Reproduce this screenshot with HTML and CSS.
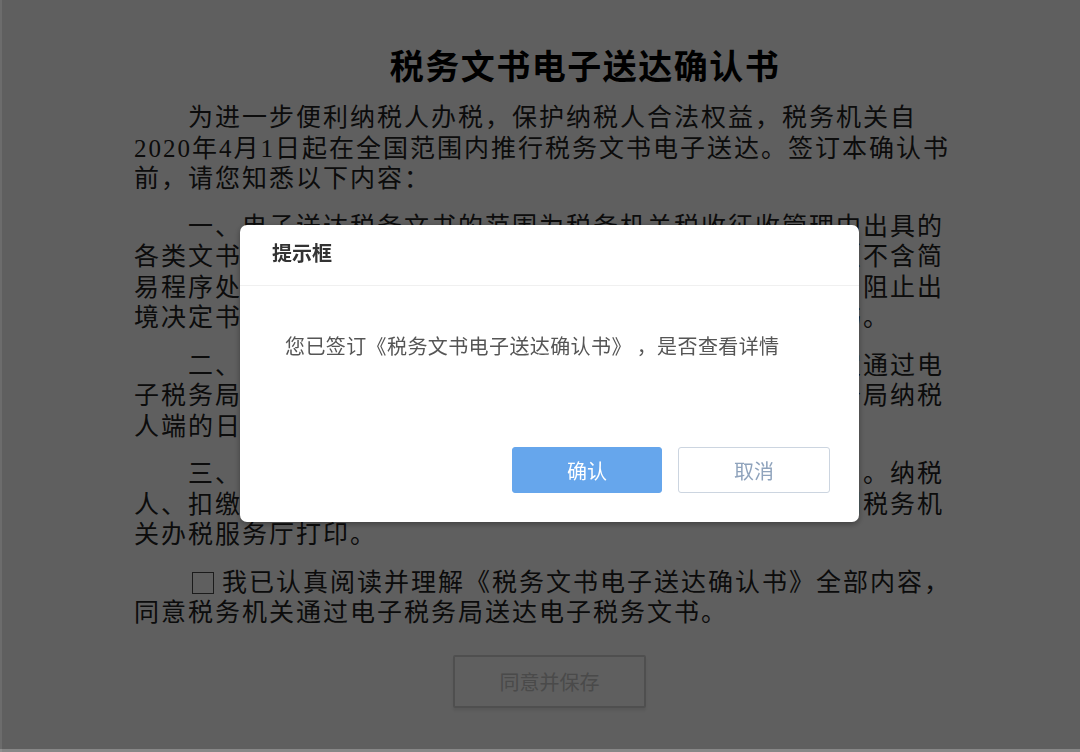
FILE: index.html
```html
<!DOCTYPE html>
<html lang="zh-CN">
<head>
  <meta charset="UTF-8">
  <title>税务文书电子送达确认书</title>
  <link rel="stylesheet" href="styles.css">
</head>
<body>
  <div class="doc">
    <h1 class="doc-title">税务文书电子送达确认书</h1>
    <p class="para">为进一步便利纳税人办税，保护纳税人合法权益，税务机关自2020年4月1日起在全国范围内推行税务文书电子送达。签订本确认书前，请您知悉以下内容：</p>
    <p class="para">一、电子送达税务文书的范围为税务机关税收征收管理中出具的各类文书，暂不包括税务处理决定书、税务行政处罚决定书（不含简易程序处罚）、税收保全措施决定书、税收强制执行决定书、阻止出境决定书以及税务稽查、税务行政复议过程中使用的税务文书。</p>
    <p class="para">二、签订本确认书后，税务机关将按照相关法律法规规定通过电子税务局送达的税务文书，以电子版式税务文书到达电子税务局纳税人端的日期为送达日期。</p>
    <p class="para">三、税务文书电子送达与其他送达方式具有同等法律效力。纳税人、扣缴义务人可在电子税务局查询、下载、打印，也可以到税务机关办税服务厅打印。</p>
    <p class="para agree"><input type="checkbox" class="agree-box" id="agree">我已认真阅读并理解《税务文书电子送达确认书》全部内容，同意税务机关通过电子税务局送达电子税务文书。</p>
    <div class="save-row">
      <button class="save-btn" type="button" disabled>同意并保存</button>
    </div>
  </div>

  <div class="mask">
    <div class="dialog">
      <div class="dialog-head">提示框</div>
      <div class="dialog-body">您已签订《税务文书电子送达确认书》 ，是否查看详情</div>
      <div class="dialog-foot">
        <button class="dlg-btn primary" type="button">确认</button>
        <button class="dlg-btn plain" type="button">取消</button>
      </div>
    </div>
  </div>
</body>
</html>
```

FILE: styles.css
```css
html, body {
  margin: 0;
  padding: 0;
  height: 100%;
  overflow: hidden;
}
body {
  background: #fff;
  color: #333;
  font-family: "Liberation Serif", "Noto Sans CJK SC", serif;
  text-spacing-trim: space-all;
}
.doc {
  width: 820px;
  margin-left: 134px;
  padding-top: 45px;
}
.doc-title {
  margin: 0 0 18px;
  padding-left: 82px;
  text-align: center;
  font-family: "Noto Sans CJK SC", sans-serif;
  font-size: 34px;
  font-weight: bold;
  letter-spacing: 1.5px;
  line-height: 40px;
  color: #000;
}
.para {
  margin: 0 0 17px;
  font-size: 25px;
  letter-spacing: 2px;
  line-height: 30.5px;
  text-indent: 54px;
  color: #222;
}
.agree-box {
  appearance: none;
  -webkit-appearance: none;
  width: 22px;
  height: 22px;
  margin: 0 8px 0 4px;
  border: 1.5px solid #4a4a4a;
  box-sizing: border-box;
  vertical-align: -3px;
  background: #fff;
}
.save-row {
  padding-left: 11px;
  padding-top: 9px;
  text-align: center;
}
.save-btn {
  width: 193px;
  height: 53px;
  background: #fff;
  border: 2px solid #d4d4d4;
  border-radius: 2px;
  color: #c6c6c6;
  font-family: "Noto Sans CJK SC", sans-serif;
  font-size: 20px;
  box-shadow: 0 3px 3px rgba(0,0,0,0.08);
}

/* 遮罩与提示框 */
.mask {
  position: fixed;
  left: 0;
  top: 0;
  right: 0;
  bottom: 0;
  background: rgba(0,0,0,0.627);
  box-shadow: inset 2px 0 0 rgba(255,255,255,0.08), inset 0 -3px 0 rgba(255,255,255,0.25);
}
.dialog {
  position: absolute;
  left: 240px;
  top: 225px;
  width: 619px;
  height: 297px;
  background: #fff;
  border-radius: 7px;
  box-shadow: 0 2px 6px rgba(0,0,0,0.35);
  display: flex;
  flex-direction: column;
  font-family: "Noto Sans CJK SC", sans-serif;
}
.dialog-head {
  height: 60px;
  padding-left: 32px;
  border-bottom: 1px solid #f0f0f0;
  font-size: 20px;
  font-weight: bold;
  line-height: 56px;
  color: #333;
}
.dialog-body {
  padding: 46px 0 0 45px;
  font-size: 20px;
  letter-spacing: 0.4px;
  line-height: 28px;
  color: #555;
}
.dialog-foot {
  margin-top: auto;
  padding: 0 29px 29px 0;
  display: flex;
  justify-content: flex-end;
  gap: 16px;
}
.dlg-btn {
  width: 150px;
  height: 46px;
  border-radius: 3px;
  font-family: "Noto Sans CJK SC", sans-serif;
  font-size: 20px;
  cursor: pointer;
}
.dlg-btn.primary {
  background: #66a6ec;
  border: 1px solid #66a6ec;
  color: #fff;
}
.dlg-btn.plain {
  width: 152px;
  background: #fff;
  border: 1.5px solid #ccd5e0;
  color: #8fa3bc;
}
```
